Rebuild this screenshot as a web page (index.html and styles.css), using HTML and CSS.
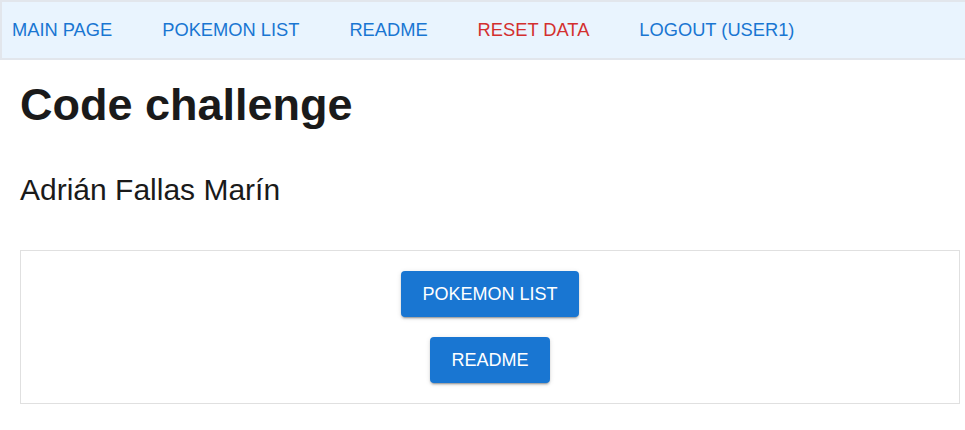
FILE: index.html
```html
<!DOCTYPE html>
<html lang="es">
<head>
<meta charset="utf-8">
<title>Code challenge</title>
<link rel="stylesheet" href="styles.css">
</head>
<body>
<nav class="topnav">
  <a class="nav-link" href="#">MAIN PAGE</a>
  <a class="nav-link" href="#">POKEMON LIST</a>
  <a class="nav-link" href="#">README</a>
  <a class="nav-link nav-danger" href="#">RESET DATA</a>
  <a class="nav-link" href="#">LOGOUT (USER1)</a>
</nav>
<main class="content">
  <h1 class="title">Code challenge</h1>
  <p class="author">Adrián Fallas Marín</p>
  <section class="actions">
    <button class="btn" type="button">POKEMON LIST</button>
    <button class="btn" type="button">README</button>
  </section>
</main>
</body>
</html>
```

FILE: styles.css
```css
html, body {
  margin: 0;
  padding: 0;
  background: #ffffff;
  font-family: "Liberation Sans", Arial, sans-serif;
  color: #1a1a1a;
}

.topnav {
  display: flex;
  align-items: center;
  gap: 50px;
  height: 56px;
  padding-left: 10px;
  background: #e9f4fe;
  border-top: 2px solid #e2e6ec;
  border-left: 2px solid #e2e6ec;
  border-bottom: 2px solid #e2e6ec;
}

.nav-link {
  font-size: 18.3px;
  color: #1976d2;
  text-decoration: none;
  line-height: 20px;
}

.nav-danger {
  color: #d32f2f;
}

.content {
  padding: 0 0 0 20px;
}

.title {
  margin: 20px 0 0;
  font-size: 45px;
  line-height: 50px;
  font-weight: 700;
  color: #1a1a1a;
}

.author {
  margin: 42px 0 0;
  font-size: 30px;
  line-height: 35px;
  color: #1a1a1a;
}

.actions {
  margin-top: 43px;
  width: 938px;
  border: 1px solid #e0e0e0;
  padding: 20px 0;
  display: flex;
  flex-direction: column;
  align-items: center;
  gap: 20px;
}

.btn {
  font-family: "Liberation Sans", Arial, sans-serif;
  font-size: 18px;
  line-height: 20px;
  color: #ffffff;
  background: #1976d2;
  border: none;
  border-radius: 4px;
  height: 46px;
  padding: 0 21px;
  box-shadow: 0 3px 1px -2px rgba(0,0,0,0.2), 0 2px 2px 0 rgba(0,0,0,0.14), 0 1px 5px 0 rgba(0,0,0,0.12);
  cursor: pointer;
}
```
